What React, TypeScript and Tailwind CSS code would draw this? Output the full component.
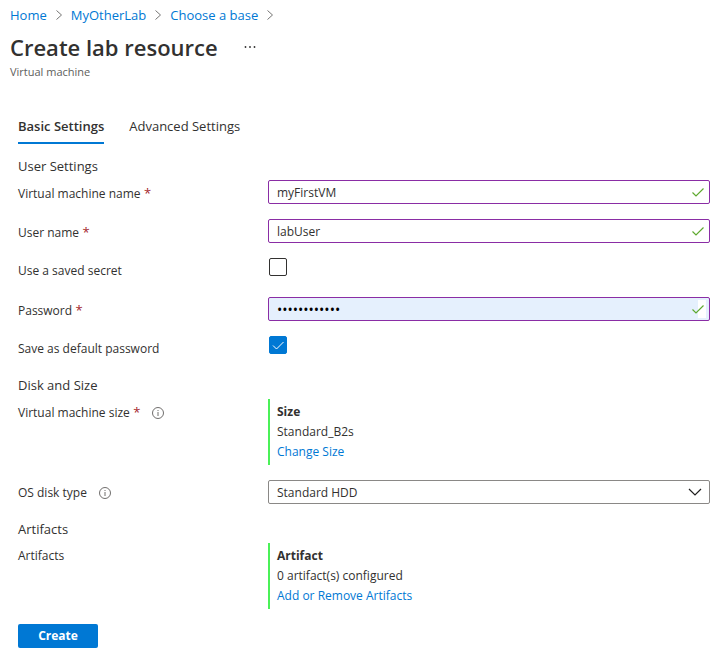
import { useId, type ReactNode } from "react";

const FIELD = "h-6 w-full rounded-xs border border-[#8a2da5] pl-2 pr-7 outline-none";

function Separator() {
  return (
    <svg viewBox="0 0 8 10" className="h-2.5 w-2" fill="none" stroke="#767574" aria-hidden="true">
      <path d="M1.5 0.5 6.5 5 1.5 9.5" />
    </svg>
  );
}

function InfoIcon() {
  return (
    <svg viewBox="0 0 12 12" className="ml-3 size-3" fill="none" stroke="#605e5c" aria-hidden="true">
      <circle cx="6" cy="6" r="5.5" strokeWidth="0.9" />
      <path d="M6 5v4M6 3v1" strokeWidth="0.9" />
    </svg>
  );
}

function ValidIcon({ patch = false }: { patch?: boolean }) {
  return (
    <svg viewBox="0 0 16 18" className="pointer-events-none absolute top-[3px] right-1 h-[18px] w-4" fill="none" aria-hidden="true">
      {patch && <rect x="8" y="0" width="8" height="18" fill="#fff" />}
      <path d="M2.5 9.5 6 13 13.5 5.5" stroke="#5ea92f" strokeWidth="1.2" />
    </svg>
  );
}

function Row({ label, htmlFor, required, info, children }: {
  label: string;
  htmlFor?: string;
  required?: boolean;
  info?: boolean;
  children: ReactNode;
}) {
  const text = (
    <>
      {label}
      {required && <span className="text-[13px] leading-5 text-[#a4262c]"> *</span>}
    </>
  );
  return (
    <div className="flex min-h-6 items-start">
      <div className="flex w-[250px] shrink-0 items-center pt-[3px] leading-5">
        {htmlFor ? <label htmlFor={htmlFor}>{text}</label> : <span>{text}</span>}
        {info && <InfoIcon />}
      </div>
      <div className="relative min-w-0 flex-1">{children}</div>
    </div>
  );
}

function TextRow({ label, value, type = "text" }: { label: string; value: string; type?: "text" | "password" }) {
  const id = useId();
  const secret = type === "password";
  return (
    <Row label={label} htmlFor={id} required>
      <input
        id={id}
        type={type}
        defaultValue={value}
        className={`block ${FIELD} ${secret ? "bg-[#e5f0fd] text-[14px] text-black" : "bg-white text-[12px]"}`}
      />
      <ValidIcon patch={secret} />
    </Row>
  );
}

function CheckRow({ label, checked = false }: { label: string; checked?: boolean }) {
  const id = useId();
  return (
    <Row label={label} htmlFor={id}>
      <div className="relative ml-px size-[18px]">
        <input
          id={id}
          type="checkbox"
          defaultChecked={checked}
          className="peer block size-[18px] appearance-none rounded-xs border border-[#323130] bg-white checked:border-[#0078d4] checked:bg-[#0078d4]"
        />
        <svg viewBox="0 0 18 18" className="pointer-events-none absolute inset-0 hidden peer-checked:block" fill="none" stroke="#fff" aria-hidden="true">
          <path d="M4 9.5 7.5 13 14.5 6" />
        </svg>
      </div>
    </Row>
  );
}

function Summary({ title, value, action }: { title: string; value: string; action: string }) {
  return (
    <div className="border-l-2 border-[#4bf158] py-[3px] pl-[7px] leading-5">
      <p className="font-bold">{title}</p>
      <p>{value}</p>
      <a href="#" className="block text-[#0078d4]">{action}</a>
    </div>
  );
}

function Section({ title, children }: { title: string; children: ReactNode }) {
  return (
    <section>
      <h2 className="mb-1 text-[13px] leading-5">{title}</h2>
      <div className="flex flex-col gap-[15px]">{children}</div>
    </section>
  );
}

export default function App() {
  const diskId = useId();
  return (
    <main className="bg-white pb-[15px] font-['Open_Sans','Noto_Sans',sans-serif] text-[12px] text-[#323130]">
      <header className="px-2.5 pt-[5px]">
        <nav aria-label="Breadcrumb" className="flex items-center gap-2 text-[13px] leading-5 text-[#0078d4]">
          <a href="#">Home</a>
          <Separator />
          <a href="#">MyOtherLab</a>
          <Separator />
          <a href="#">Choose a base</a>
          <Separator />
        </nav>
        <div className="mt-[7px] flex items-center">
          <h1 className="text-[22px] leading-[30px] font-semibold">Create lab resource</h1>
          <button type="button" aria-label="More actions" className="ml-6 flex h-4 w-4 items-center justify-center">
            <svg viewBox="0 0 12 2" className="h-0.5 w-3" fill="#323130" aria-hidden="true">
              <circle cx="1.5" cy="1" r="0.9" />
              <circle cx="6" cy="1" r="0.9" />
              <circle cx="10.5" cy="1" r="0.9" />
            </svg>
          </button>
        </div>
        <p className="mt-px text-[11px] leading-[18px] text-[#605e5c]">Virtual machine</p>
      </header>

      <div role="tablist" className="mt-[33px] flex gap-[25px] px-[18px] text-[13px] leading-5">
        <button type="button" role="tab" aria-selected="true" className="h-[30px] border-b-2 border-[#0078d4] pt-0.5 pb-1.5 font-semibold">
          Basic Settings
        </button>
        <button type="button" role="tab" aria-selected="false" className="h-[30px] border-b-2 border-transparent pt-0.5 pb-1.5">
          Advanced Settings
        </button>
      </div>

      <form className="mt-3 flex flex-col gap-[15px] pr-[7px] pl-[18px]" onSubmit={(e) => e.preventDefault()}>
        <Section title="User Settings">
          <TextRow label="Virtual machine name" value="myFirstVM" />
          <TextRow label="User name" value="labUser" />
          <CheckRow label="Use a saved secret" />
          <TextRow label="Password" value="labPassword1" type="password" />
          <CheckRow label="Save as default password" checked />
        </Section>

        <Section title="Disk and Size">
          <Row label="Virtual machine size" required info>
            <Summary title="Size" value="Standard_B2s" action="Change Size" />
          </Row>
          <Row label="OS disk type" htmlFor={diskId} info>
            <select
              id={diskId}
              className="block h-6 w-full appearance-none rounded-xs border border-[#8a8886] bg-white pt-px pr-7 pl-2 outline-none"
            >
              <option>Standard HDD</option>
            </select>
            <svg viewBox="0 0 14 8" className="pointer-events-none absolute top-2 right-2 h-2 w-3.5" fill="none" stroke="#201f1e" strokeWidth="1.2" aria-hidden="true">
              <path d="M1 1 7 7 13 1" />
            </svg>
          </Row>
        </Section>

        <Section title="Artifacts">
          <Row label="Artifacts">
            <Summary title="Artifact" value="0 artifact(s) configured" action="Add or Remove Artifacts" />
          </Row>
        </Section>

        <button type="submit" className="h-6 w-20 rounded-xs bg-[#0078d4] text-[12px] leading-5 font-bold text-white">
          Create
        </button>
      </form>
    </main>
  );
}
